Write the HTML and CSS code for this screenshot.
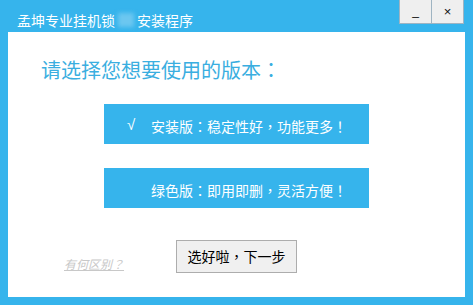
FILE: index.html
```html
<!DOCTYPE html>
<html lang="zh-CN">
<head>
<meta charset="utf-8">
<link rel="stylesheet" href="styles.css">
</head>
<body>
<div class="window">
  <div class="titlebar">
    <div class="title">孟坤专业挂机锁<span class="blur"></span>安装程序</div>
    <div class="controls">
      <div class="ctl">_</div>
      <div class="ctl close">×</div>
    </div>
  </div>
  <div class="panel">
    <h1 class="heading">请选择您想要使用的版本<span class="p" lang="zh-TW">：</span></h1>
    <div class="options">
      <div class="option"><span class="check">√</span><span class="label">安装版<span class="p" lang="zh-TW">：</span>稳定性好<span class="p" lang="zh-TW">，</span>功能更多<span class="p" lang="zh-TW">！</span></span></div>
      <div class="option"><span class="check"></span><span class="label">绿色版<span class="p" lang="zh-TW">：</span>即用即删<span class="p" lang="zh-TW">，</span>灵活方便<span class="p" lang="zh-TW">！</span></span></div>
    </div>
    <div class="footer">
      <a class="diff">有何区别<span class="p" lang="zh-TW">？</span></a>
      <div class="next">选好啦<span class="p" lang="zh-TW">，</span>下一步</div>
    </div>
  </div>
</div>
</body>
</html>
```
FILE: styles.css
```css
html, body {
  margin: 0;
  padding: 0;
  background: #36b4ec;
  font-family: "Noto Sans CJK SC", "Microsoft YaHei", sans-serif;
}
.p {
  font-family: "Noto Sans CJK TC", sans-serif;
}
.window {
  width: 473px;
  height: 305px;
  display: flex;
  flex-direction: column;
}
.titlebar {
  height: 32px;
  display: flex;
  justify-content: space-between;
  align-items: flex-start;
}
.title {
  color: #ffffff;
  font-size: 14px;
  line-height: 16px;
  margin: 12px 0 0 17px;
  display: flex;
  align-items: center;
}
.blur {
  display: inline-block;
  width: 16px;
  height: 14px;
  margin: 0 3px;
  background: #6cc7f0;
  filter: blur(2px);
}
.controls {
  display: flex;
  margin-right: 9px;
}
.ctl {
  width: 31px;
  height: 23px;
  background: #efefef;
  border: 1px solid #9fb4c2;
  border-top: none;
  color: #111;
  font-family: "Liberation Sans", sans-serif;
  font-size: 12px;
  line-height: 22px;
  text-align: center;
}
.ctl.close {
  border-left: none;
  font-size: 13px;
  line-height: 24px;
}
.panel {
  margin: 0 8px 8px 8px;
  background: #ffffff;
  height: 265px;
  display: flex;
  flex-direction: column;
}
.heading {
  margin: 26px 0 0 33px;
  font-size: 20px;
  line-height: 24px;
  font-weight: normal;
  color: #3aaee0;
}
.options {
  margin: 22px 0 0 96px;
  display: flex;
  flex-direction: column;
  gap: 24px;
}
.option {
  width: 265px;
  height: 40px;
  background: #36b4ec;
  color: #ffffff;
  display: flex;
  align-items: center;
  font-size: 14px;
}
.check {
  width: 24px;
  margin-left: 23px;
  font-family: "Liberation Sans", sans-serif;
  font-size: 15px;
}
.label {
  margin-top: 3px;
}
.footer {
  margin: 32px 0 0 56px;
  display: flex;
  align-items: flex-start;
}
.diff {
  font-size: 12px;
  font-style: italic;
  color: #c8c8c8;
  text-decoration: underline;
  margin-top: 15px;
  width: 112px;
}
.next {
  width: 119px;
  height: 31px;
  background: #f0f0f0;
  border: 1px solid #adadad;
  font-size: 14px;
  line-height: 31px;
  color: #000;
  text-align: center;
}
```
